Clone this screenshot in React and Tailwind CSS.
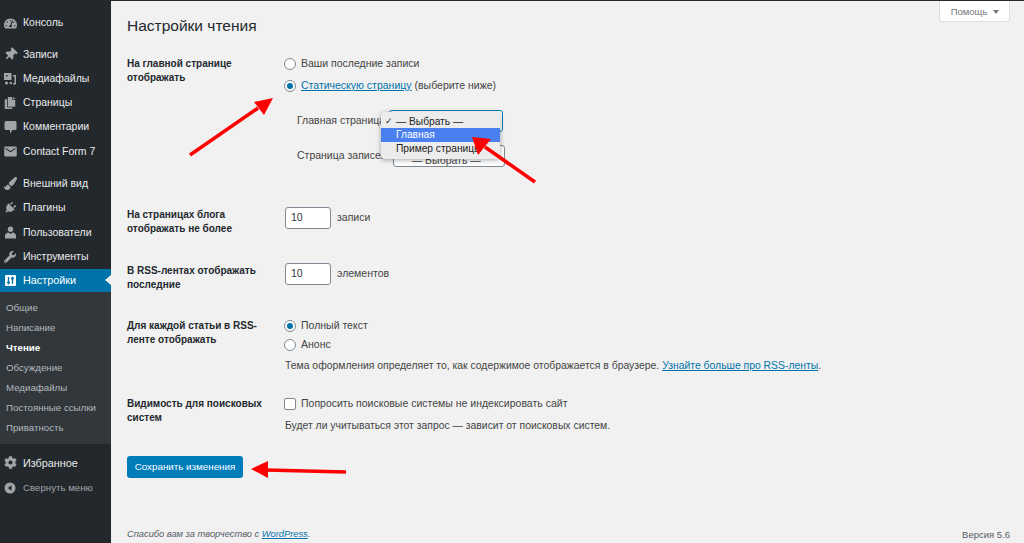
import { FaTachometerAlt, FaThumbtack, FaCopy, FaPaintBrush, FaPlug, FaWrench, FaCog } from "react-icons/fa";
import { MdEmail } from "react-icons/md";

function MediaIcon() {
  return (
    <svg width="14" height="14" viewBox="0 0 14 14" fill="currentColor">
      <path d="M1 1h7.500v7H1z M3 3v1.500h1.500V3z" fillRule="evenodd" />
      <rect x="10" y="3" width="3" height="1.500" />
      <rect x="11.500" y="3" width="1.500" height="9" />
      <rect x="10" y="11" width="3" height="1.500" />
      <circle cx="3.500" cy="11" r="1.600" />
      <circle cx="7.800" cy="11" r="1.300" />
    </svg>
  );
}

function CommentIcon() {
  return (
    <svg width="13" height="14" viewBox="0 0 13 14" fill="currentColor">
      <path d="M2 1h9a1.500 1.500 0 0 1 1.500 1.500v6A1.500 1.500 0 0 1 11 10H8.500L6 13.500V10H2A1.500 1.500 0 0 1 .5 8.500v-6A1.500 1.500 0 0 1 2 1z" />
    </svg>
  );
}

function UserIcon() {
  return (
    <svg width="13" height="13" viewBox="0 0 13 13" fill="currentColor">
      <circle cx="6.500" cy="3.300" r="2.700" />
      <path d="M1 12.500V9.500C1 7.800 3 6.800 4.500 6.500L6.500 8L8.500 6.500C10 6.800 12 7.800 12 9.500V12.500z" />
    </svg>
  );
}

function SettingsIcon() {
  return (
    <svg width="11" height="11" viewBox="0 0 11 11">
      <rect width="11" height="11" rx="1" fill="#fff" />
      <path d="M3.500 2v7.500M2 7.500h3M7.500 1.500V9M6 3.500h3" stroke="#0073aa" strokeWidth="1.300" />
    </svg>
  );
}

function CollapseIcon() {
  return (
    <svg width="12" height="12" viewBox="0 0 12 12">
      <circle cx="6" cy="6" r="5.500" fill="#a0a5aa" />
      <path d="M7.500 3.200v5.600L3.800 6z" fill="#23282d" />
    </svg>
  );
}

const topItems = [{ icon: <FaTachometerAlt size={13} />, label: "Консоль" }];
const contentItems = [
  { icon: <FaThumbtack size={13} className="rotate-45" />, label: "Записи" },
  { icon: <MediaIcon />, label: "Медиафайлы" },
  { icon: <FaCopy size={12} />, label: "Страницы" },
  { icon: <CommentIcon />, label: "Комментарии" },
  { icon: <MdEmail size={15} />, label: "Contact Form 7" },
];
const adminItems = [
  { icon: <FaPaintBrush size={13} />, label: "Внешний вид" },
  { icon: <FaPlug size={12} className="rotate-45" />, label: "Плагины" },
  { icon: <UserIcon />, label: "Пользователи" },
  { icon: <FaWrench size={12} />, label: "Инструменты" },
];
const subItems = ["Общие", "Написание", "Чтение", "Обсуждение", "Медиафайлы", "Постоянные ссылки", "Приватность"];

function MenuItem({ icon, label }) {
  return (
    <div className="flex h-[24.3px] items-center text-[#e8eaeb]">
      <span className="flex w-[23px] shrink-0 justify-center pl-[2px] pr-[5px] text-[#a0a5aa]">{icon}</span>
      <span>{label}</span>
    </div>
  );
}

function Sidebar() {
  return (
    <aside className="flex w-[111px] shrink-0 flex-col bg-[#23282d] pt-[11px] text-[10.5px]">
      <div className="mb-[7px]">
        {topItems.map((item) => <MenuItem key={item.label} {...item} />)}
      </div>
      <div className="mb-[8px]">
        {contentItems.map((item) => <MenuItem key={item.label} {...item} />)}
      </div>
      <div>
        {adminItems.map((item) => <MenuItem key={item.label} {...item} />)}
      </div>
      <div className="relative flex h-[23px] items-center bg-[#0073aa] text-white">
        <span className="flex w-[23px] shrink-0 justify-center pr-[3px]"><SettingsIcon /></span>
        <span className="text-[10.8px]">Настройки</span>
        <span className="absolute right-0 top-[6px] h-0 w-0 border-y-[5px] border-r-[6px] border-y-transparent border-r-[#f1f1f1]" />
      </div>
      <div className="bg-[#32373c] py-[6px] text-[9.7px] text-[#b4b9be]">
        {subItems.map((s) => (
          <div key={s} className={s === "Чтение" ? "flex h-[20px] items-center pl-[6px] font-bold text-white" : "flex h-[20px] items-center pl-[6px]"}>
            {s}
          </div>
        ))}
      </div>
      <div className="mt-[7px] flex h-[24px] items-center text-[10.8px] font-medium text-[#e8eaeb]">
        <span className="flex w-[23px] shrink-0 justify-center pl-[2px] pr-[5px] text-[#a0a5aa]"><FaCog size={13} /></span>
        Избранное
      </div>
      <div className="mt-[1px] flex h-[24px] items-center text-[#a0a5aa]">
        <span className="flex w-[23px] shrink-0 justify-center pl-[2px] pr-[5px]"><CollapseIcon /></span>
        <span className="text-[9.7px]">Свернуть меню</span>
      </div>
    </aside>
  );
}

function Radio({ checked }) {
  return (
    <span className="-ml-[1px] mr-[5px] flex h-[12px] w-[12px] shrink-0 items-center justify-center rounded-full border border-[#7e8993] bg-white">
      {checked && <span className="h-[6px] w-[6px] rounded-full bg-[#0073aa]" />}
    </span>
  );
}

function Row({ label, className, children }) {
  return (
    <div className={`flex ${className}`}>
      <div className="w-[158px] shrink-0 text-[10px] font-bold leading-[13.500px] text-[#23282d]">{label}</div>
      <div className="min-w-0 flex-1">{children}</div>
    </div>
  );
}

function NumberField({ unit }) {
  return (
    <div className="flex items-center text-[10.5px]">
      <span className="mr-[6px] flex h-[22px] w-[46px] items-center rounded-[3px] border border-[#7e8993] bg-white pl-[5px] text-[#32373c]">10</span>
      {unit}
    </div>
  );
}

function Arrows() {
  return (
    <svg className="pointer-events-none absolute left-0 top-0 z-20" width="1024" height="543" fill="#ff0000">
      <path d="M190 155L258 108" stroke="#ff0000" strokeWidth="3.500" />
      <path d="M273 98L254 102L264 115z" />
      <path d="M535 182L485 147" stroke="#ff0000" strokeWidth="3.500" />
      <path d="M472 137L491 139L478 155z" />
      <path d="M346 472L266 470" stroke="#ff0000" strokeWidth="3.500" />
      <path d="M251 469L268 461L268 478z" />
    </svg>
  );
}

export default function App() {
  return (
    <div className="relative flex h-[543px] w-[1024px] overflow-hidden bg-[#f1f1f1] font-['Liberation_Sans',Arial,sans-serif] text-[10.5px] text-[#444]">
      <Sidebar />
      <main className="flex min-w-0 flex-1 flex-col border-t border-t-[#23282d] pl-[16px] pr-[14px]">
        <div className="flex items-start justify-between">
          <h1 className="pt-[15px] text-[15.5px] leading-[20px] text-[#23282d]">Настройки чтения</h1>
          <div className="flex h-[21px] w-[71px] items-center justify-center rounded-b-[3px] border border-t-0 border-[#ddd] bg-white pl-[1px] pt-[2px] text-[9.5px] text-[#72777c]">
            Помощь
            <span className="ml-[6px] h-0 w-0 border-x-[3.500px] border-t-[4px] border-x-transparent border-t-[#72777c]" />
          </div>
        </div>

        <Row label={<>На главной странице<br />отображать</>} className="mt-[21px] h-[146px]">
          <div className="flex h-[13px] items-center">
            <Radio />Ваши последние записи
          </div>
          <div className="mt-[9px] flex h-[13px] items-center">
            <Radio checked />
            <a className="text-[#0073aa] underline">Статическую страницу</a>
            <span className="ml-[3px]">(выберите ниже)</span>
          </div>
          <div className="relative ml-[12px] mt-[18px] flex h-[22px] items-center">
            <span className="mr-[4px]">Главная страница</span>
            <span className="h-[22px] w-[114px] rounded-[3px] border border-[#007cba] bg-white" />
            <div className="absolute left-[84px] top-[2px] z-10 w-[119px] rounded-[4px] bg-[#ececec] py-[3px] text-[10.2px] text-[#222] shadow-[0_1px_5px_rgba(0,0,0,0.35)]">
              <div className="flex h-[13px] items-center pl-[4px]"><span className="w-[11px] text-[9px]">✓</span>— Выбрать —</div>
              <div className="flex h-[14px] items-center bg-[#4a7ff0] pl-[15px] text-white">Главная</div>
              <div className="flex h-[14px] items-center pl-[15px]">Пример страницы</div>
            </div>
          </div>
          <div className="ml-[12px] mt-[13px] flex h-[22px] items-center">
            <span className="mr-[6px]">Страница записей</span>
            <span className="flex h-[22px] w-[112px] items-center rounded-[3px] border border-[#7e8993] bg-white pl-[18px] pt-[10px]">— Выбрать —</span>
          </div>
        </Row>

        <Row label={<>На страницах блога<br />отображать не более</>} className="mt-[5px] h-[56px]">
          <div className="-mt-[1px]"><NumberField unit="записи" /></div>
        </Row>
        <Row label={<>В RSS-лентах отображать<br />последние</>} className="h-[55px]">
          <div className="-mt-[1px]"><NumberField unit="элементов" /></div>
        </Row>
        <Row label={<>Для каждой статьи в RSS-<br />ленте отображать</>} className="h-[78px]">
          <div className="flex h-[13px] items-center"><Radio checked />Полный текст</div>
          <div className="mt-[6px] flex h-[13px] items-center"><Radio />Анонс</div>
          <div className="mt-[8px] flex h-[13px] items-center text-[10.4px]">
            Тема оформления определяет то, как содержимое отображается в браузере.
            <a className="ml-[3px] text-[#0073aa] underline">Узнайте больше про RSS-ленты</a>.
          </div>
        </Row>
        <Row label={<>Видимость для поисковых<br />систем</>} className="h-[59px]">
          <div className="flex h-[13px] items-center">
            <span className="-ml-[1px] mr-[5px] h-[12px] w-[12px] rounded-[2px] border border-[#7e8993] bg-white" />
            Попросить поисковые системы не индексировать сайт
          </div>
          <div className="mt-[9px] text-[10.4px] leading-[13px]">Будет ли учитываться этот запрос — зависит от поисковых систем.</div>
        </Row>

        <button className="flex h-[22px] w-[116px] items-center justify-center rounded-[3px] bg-[#007cba] text-[9.8px] text-white">
          Сохранить изменения
        </button>

        <footer className="mt-auto flex items-center justify-between pb-[2px] text-[9.5px] leading-[13px] text-[#555d66]">
          <span className="text-[9.3px] italic">Спасибо вам за творчество с <a className="text-[#0073aa] underline">WordPress</a>.</span>
          <span>Версия 5.6</span>
        </footer>
      </main>
      <Arrows />
    </div>
  );
}
